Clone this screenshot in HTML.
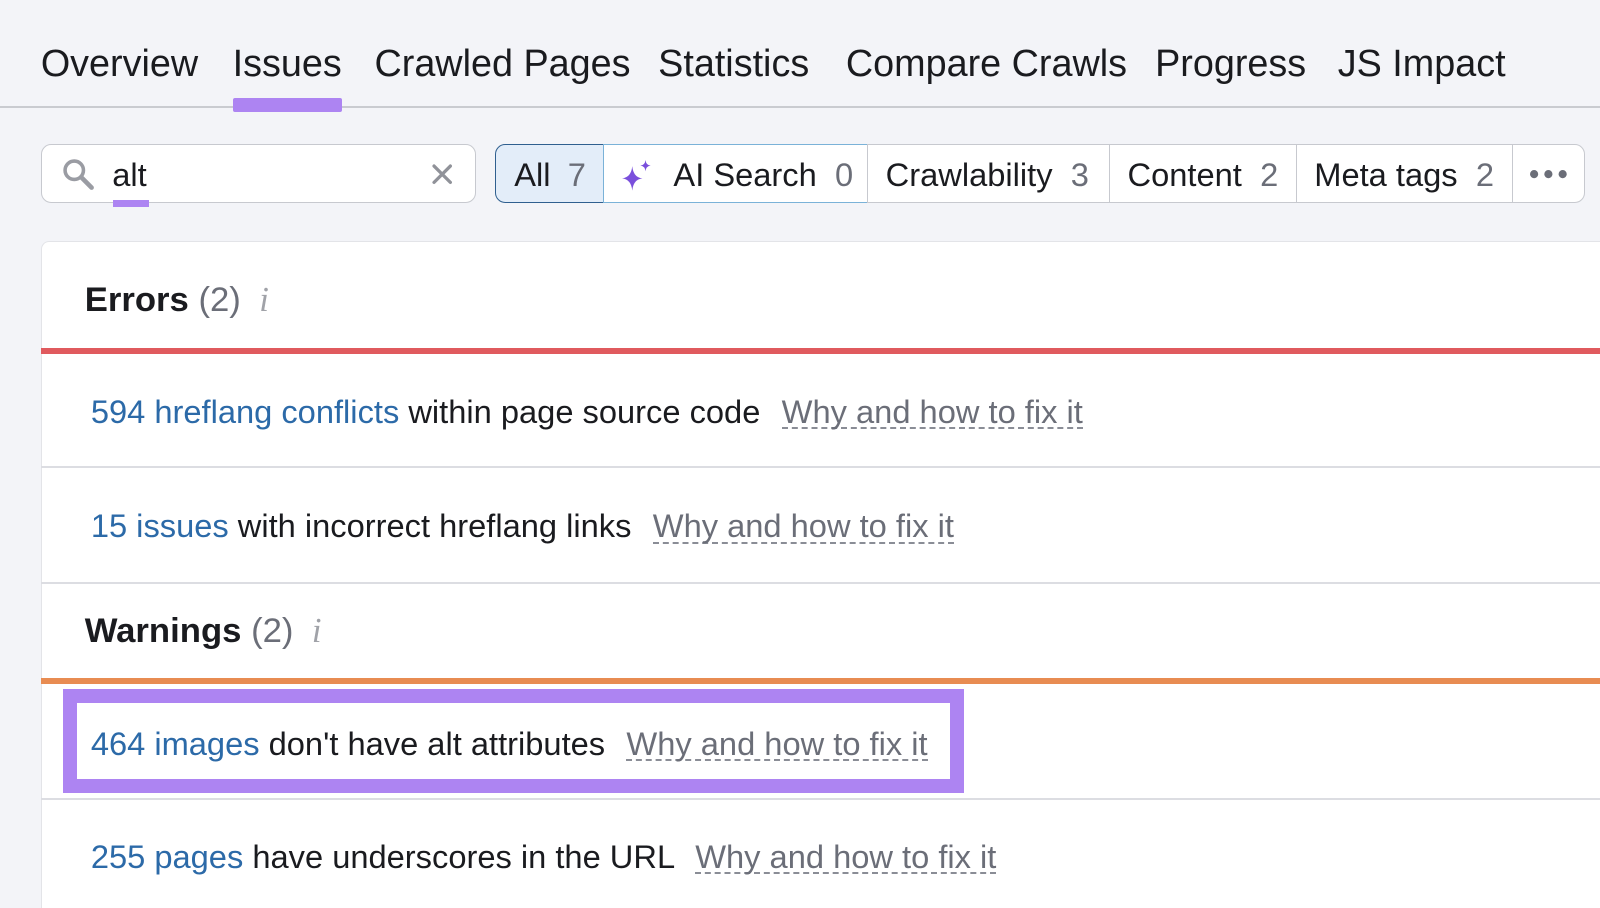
<!DOCTYPE html>
<html><head><meta charset="utf-8"><style>
*{margin:0;padding:0;box-sizing:border-box}
html{background:#f3f4f8}
body{width:1568px;height:890px;overflow:hidden;background:#f3f4f8;font-family:"Liberation Sans",sans-serif;color:#1a1b1f;position:relative;zoom:1.0204}
.a{position:absolute;white-space:nowrap}
.tab{font-size:37px;top:41px}
.row{font-size:32px;line-height:36px}
.lnk{color:#2c6aa8}
.why{color:#6b6e78;border-bottom:2px dashed #8a8d96;line-height:30px;display:inline-block;margin-left:12px}
.sep{position:absolute;left:40px;right:0;height:2px;background:#dcdde2}
.fb{position:absolute;top:141px;height:58px;border:1px solid #c7c9cf;background:#fff;font-size:32px;line-height:59px;padding-left:17px}
.g{color:#6b6e78}
</style></head><body>
<div class="a tab" style="left:40px">Overview</div>
<div class="a tab" style="left:228px">Issues</div>
<div class="a tab" style="left:367px">Crawled Pages</div>
<div class="a tab" style="left:645px">Statistics</div>
<div class="a tab" style="left:829px">Compare Crawls</div>
<div class="a tab" style="left:1132px">Progress</div>
<div class="a tab" style="left:1311px">JS Impact</div>
<div style="position:absolute;left:0;right:0;top:104px;height:2px;background:#c9cbd0"></div>
<div style="position:absolute;left:228px;width:107px;top:96px;height:14px;background:#ad84f2;border-radius:2px"></div>

<div style="position:absolute;left:40px;top:141px;width:426px;height:58px;border:1px solid #c7c9cf;border-radius:10px;background:#fff"></div>
<svg class="a" style="left:60px;top:154px" width="34" height="34" viewBox="0 0 34 34"><circle cx="13" cy="13" r="9" fill="none" stroke="#9a9ca3" stroke-width="3.5"/><line x1="20" y1="20" x2="30" y2="30" stroke="#9a9ca3" stroke-width="4.5" stroke-linecap="round"/></svg>
<div class="a" style="left:110px;top:153px;font-size:32px">alt</div>
<div style="position:absolute;left:111px;top:196px;width:35px;height:7px;background:#ad84f2"></div>
<svg class="a" style="left:423px;top:161px" width="20" height="20" viewBox="0 0 20 20"><path d="M2 2L18 18M18 2L2 18" stroke="#909299" stroke-width="3.2" stroke-linecap="round"/></svg>

<div class="fb" style="left:485px;width:107px;border-radius:10px 0 0 10px;background:#e3edf9;border-color:#2f5f8f;padding-left:18px">All <span class="g" style="margin-left:8px">7</span></div>
<div class="fb" style="left:591px;width:260px;border-color:#7ab2d8;padding-left:68px">AI Search <span class="g" style="margin-left:9px">0</span></div>
<svg class="a" style="left:608px;top:155px" width="34" height="34" viewBox="0 0 34 34"><path d="M12 8 Q13 19 22 20 Q13 21 12 32 Q11 21 2 20 Q11 19 12 8Z" fill="#7a4fdc"/><path d="M25 2 Q25.5 7 30 7.5 Q25.5 8 25 13 Q24.5 8 20 7.5 Q24.5 7 25 2Z" fill="#7a4fdc"/></svg>
<div class="fb" style="left:850px;width:238px">Crawlability <span class="g" style="margin-left:9px">3</span></div>
<div class="fb" style="left:1087px;width:184px">Content <span class="g" style="margin-left:9px">2</span></div>
<div class="fb" style="left:1270px;width:213px">Meta tags <span class="g" style="margin-left:9px">2</span></div>
<div class="fb" style="left:1482px;width:71px;border-radius:0 10px 10px 0"></div>
<svg class="a" style="left:1498px;top:164px" width="40" height="14" viewBox="0 0 40 14"><circle cx="5" cy="7" r="4" fill="#6b6e78"/><circle cx="19" cy="7" r="4" fill="#6b6e78"/><circle cx="33" cy="7" r="4" fill="#6b6e78"/></svg>

<div style="position:absolute;left:40px;top:236px;right:0;bottom:0;background:#fff;border-top:1px solid #e3e4e8;border-left:1px solid #e3e4e8;border-radius:8px 0 0 0"></div>
<div class="a" style="left:83px;top:274px;font-size:34px"><b>Errors</b> <span class="g">(2)</span><span style="color:#a0a2a8;font-style:italic;font-family:'Liberation Serif',serif;margin-left:18px">i</span></div>
<div style="position:absolute;left:40px;right:0;top:341px;height:6px;background:#e05a5e"></div>
<div class="a row" style="left:89px;top:386px"><span class="lnk">594 hreflang conflicts</span> within page source code <span class="why">Why and how to fix it</span></div>
<div class="sep" style="top:457px"></div>
<div class="a row" style="left:89px;top:498px"><span class="lnk">15 issues</span> with incorrect hreflang links <span class="why">Why and how to fix it</span></div>
<div class="sep" style="top:570px"></div>
<div class="a" style="left:83px;top:599px;font-size:34px"><b>Warnings</b> <span class="g">(2)</span><span style="color:#a0a2a8;font-style:italic;font-family:'Liberation Serif',serif;margin-left:18px">i</span></div>
<div style="position:absolute;left:40px;right:0;top:664px;height:6px;background:#e88c52"></div>
<div style="position:absolute;left:62px;top:675px;width:883px;height:102px;border:14px solid #ad84f2;background:#fff"></div>
<div class="a row" style="left:89px;top:711px"><span class="lnk">464 images</span> don't have alt attributes <span class="why">Why and how to fix it</span></div>
<div class="sep" style="top:782px"></div>
<div class="a row" style="left:89px;top:822px"><span class="lnk">255 pages</span> have underscores in the URL <span class="why">Why and how to fix it</span></div>
</body></html>
